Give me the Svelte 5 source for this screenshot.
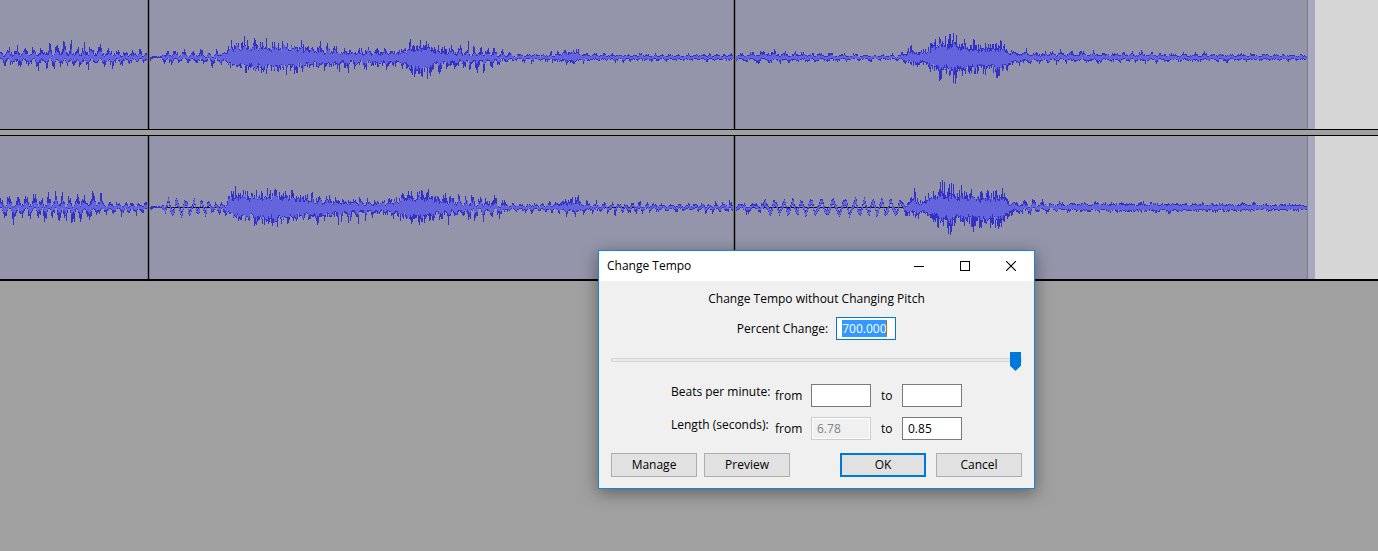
<script>
  import { onMount } from 'svelte';

  const WIDTH = 1308;

  // Envelope points: [x, peak above, peak below, body (0..1), swing (0..1)]
  const left = [
    [0, 11, 9, .3, .6], [14, 14, 12, .3, .6], [35, 16, 13, .3, .6], [60, 19, 14, .35, .6], [95, 16, 13, .35, .6],
    [108, 11, 12, .35, .6], [130, 8, 9, .3, .6], [147, 8, 6, .3, .6], [150, 2, 4, .3, .4], [153, 1, 0, 1, 0],
    [161, 1, 0, 1, 0], [163, 9, 7, .3, .6], [190, 8, 8, .3, .7], [215, 10, 9, .3, .7], [225, 8, 8, .5, .3],
    [232, 20, 14, .6, .1], [260, 19, 18, .6, .1], [290, 18, 17, .6, .1], [310, 16, 15, .5, .25], [325, 15, 15, .5, .3],
    [350, 12, 14, .45, .4], [380, 12, 13, .45, .4], [400, 10, 11, .5, .3], [408, 16, 15, .55, .1], [416, 17, 25, .5, .1],
    [427, 17, 25, .5, .1], [432, 15, 15, .5, .2], [450, 14, 15, .4, .4], [470, 16, 15, .35, .6], [490, 13, 15, .35, .6],
    [505, 8, 8, .3, .6], [515, 5, 5, .35, .6], [550, 6, 6, .35, .6], [572, 12, 8, .45, .2], [580, 8, 7, .4, .4],
    [590, 5, 5, .35, .5], [630, 4, 4, .4, .5], [700, 4, 4, .4, .5], [734, 4, 4, .4, .5], [765, 8, 7, .35, .5],
    [810, 6, 6, .35, .5], [860, 4, 4, .35, .6], [900, 4, 4, .35, .6], [908, 12, 11, .45, .3], [920, 12, 12, .45, .3],
    [927, 10, 10, .5, .2], [935, 26, 22, .5, .05], [957, 28, 27, .45, .05], [963, 17, 19, .55, .1], [985, 17, 18, .5, .1],
    [1003, 18, 22, .5, .1], [1010, 9, 10, .5, .3], [1024, 11, 10, .4, .5], [1033, 7, 7, .4, .5], [1065, 8, 7, .4, .5],
    [1105, 7, 6, .4, .5], [1155, 6, 6, .4, .5], [1200, 5, 5, .4, .5], [1250, 4, 4, .4, .4], [1307, 3, 3, .5, .3]
  ];
  const right = [
    [0, 12, 11, .3, .7], [14, 14, 22, .3, .7], [20, 15, 14, .3, .7], [45, 17, 14, .3, .7], [60, 18, 19, .3, .7],
    [72, 16, 19, .3, .7], [91, 21, 12, .35, .6], [99, 21, 10, .35, .6], [103, 6, 8, .3, .6], [130, 8, 9, .3, .7],
    [147, 8, 6, .3, .6], [150, 2, 4, .3, .4], [153, 1, 0, 1, 0], [161, 1, 0, 1, 0], [165, 10, 9, .25, .9],
    [200, 8, 9, .2, .95], [225, 8, 10, .3, .7], [230, 20, 13, .6, .1], [248, 19, 18, .6, .1], [275, 20, 22, .6, .1],
    [300, 17, 16, .55, .2], [320, 15, 19, .5, .3], [350, 12, 15, .45, .4], [375, 10, 12, .4, .5], [395, 12, 11, .5, .3],
    [412, 21, 21, .5, .1], [425, 20, 18, .5, .2], [445, 19, 17, .4, .5], [470, 17, 16, .35, .6], [500, 11, 14, .3, .7],
    [508, 5, 5, .35, .6], [550, 6, 6, .35, .6], [575, 15, 9, .4, .3], [590, 6, 6, .35, .7], [620, 7, 8, .25, .84],
    [650, 6, 6, .3, .7], [690, 5, 5, .3, .7], [734, 7, 7, .25, .7], [765, 7, 8, .25, .86], [800, 9, 9, .18, .95],
    [850, 10, 9, .18, .95], [903, 9, 9, .2, .9], [907, 10, 13, .4, .4], [914, 17, 13, .4, .3], [922, 10, 12, .45, .3],
    [928, 16, 13, .5, .1], [937, 28, 21, .45, .05], [950, 27, 30, .45, .05], [957, 20, 21, .5, .1], [972, 21, 21, .5, .1],
    [980, 18, 27, .5, .1], [1003, 20, 21, .5, .1], [1010, 9, 10, .4, .4], [1025, 8, 11, .3, .7], [1040, 11, 8, .3, .7],
    [1056, 7, 6, .35, .6], [1075, 6, 5, .5, .3], [1150, 6, 6, .5, .3], [1230, 5, 5, .5, .3], [1307, 4, 4, .5, .3]
  ];

  function noise(n) {
    const v = Math.sin(n * 12.9898) * 43758.5453;
    return v - Math.floor(v);
  }

  function at(points, x) {
    let i = 0;
    while (i < points.length - 2 && points[i + 1][0] <= x) i++;
    const a = points[i];
    const b = points[i + 1];
    const t = (x - a[0]) / (b[0] - a[0]);
    return a.map((v, k) => v + (b[k] - v) * t);
  }

  // One column per sample: the outer peak and the inner RMS bar.
  function wave(points, mid, seed) {
    let peak = '';
    let rms = '';
    for (let x = 0; x < WIDTH - 1; x++) {
      const [, up, down, body, swing] = at(points, x);
      const n1 = noise(x + seed * 971);
      const n2 = noise(x * 3 + seed * 577 + 5);
      const n3 = noise(x * 7 + seed * 131);
      const phase = (x * 2 * Math.PI) / (x > 734 ? 10 : 7.6) + 1.4 * Math.sin(x / 13 + seed);
      let top, bottom, innerTop, innerBottom;
      if (swing > 0.85) {
        const c = (Math.sin(phase) + 0.2 * Math.sin(phase * 2.3)) * up * 0.6;
        top = Math.round(c + 1.5 + n1 * 2);
        bottom = Math.round(-c + 1.5 + n2 * 2);
        innerTop = top - 1 - Math.round(n3);
        innerBottom = bottom - 1;
      } else {
        const s = Math.max(-1, Math.min(1, Math.sin(phase) + 1.1 * (n3 - 0.5)));
        const gateUp = 1 - swing * (0.5 - 0.5 * s) * 1.4;
        const gateDown = 1 - swing * (0.5 + 0.5 * s) * 1.4;
        const lull = 0.92 + 0.14 * Math.sin(phase * 0.83 + 2);
        const rawTop = up * (0.48 + 0.62 * n1 ** 1.5) * gateUp * lull;
        const rawBottom = down * (0.48 + 0.62 * n2 ** 1.5) * gateDown * lull;
        top = Math.round(rawTop);
        bottom = Math.round(rawBottom);
        innerTop = Math.round(Math.min(rawTop - 0.7, up * (body + 0.08) * (0.55 + 0.5 * n3) * gateUp * lull));
        innerBottom = Math.round(Math.min(rawBottom - 0.7, down * (body + 0.08) * (0.6 + 0.5 * n1) * gateDown * lull));
      }
      if (top + bottom < 0) bottom = -top;
      peak += `M${x} ${mid - top}h1V${mid + bottom + 1}h-1z`;
      if (up > 2 && innerTop + innerBottom >= 0) {
        rms += `M${x} ${mid - innerTop}h1V${mid + innerBottom + 1}h-1z`;
      }
    }
    return { peak, rms };
  }

  const tracks = [
    { name: 'Left channel', height: 129, mid: 57, ...wave(left, 57, 1) },
    { name: 'Right channel', height: 143, mid: 71, ...wave(right, 71, 2) }
  ];
  const splits = [148, 734];

  let percentInput;
  onMount(() => {
    percentInput.focus();
    percentInput.select();
  });
</script>

<main>
  <section class="tracks" aria-label="Audio tracks">
    {#each tracks as track}
      <div class="track">
        <svg class="clip" role="img" aria-label={track.name} height={track.height} viewBox="0 0 {WIDTH} {track.height}" preserveAspectRatio="none" shape-rendering="crispEdges">
          <rect width={WIDTH} height={track.height} fill="#9494aa" />
          <rect y={track.mid} width={WIDTH - 1} height="1" fill="#000" />
          <path d={track.peak} fill="#3232c8" />
          <path d={track.rms} fill="#6464dc" />
          {#each splits as x}
            <rect x={x - 1} width="3" height={track.height} fill="#77777f" />
            <rect {x} width="1" height={track.height} fill="#000" />
          {/each}
          <rect x={WIDTH - 1} width="1" height={track.height} fill="#7c7c86" />
        </svg>
        <div class="selection"></div>
        <div class="blank"></div>
      </div>
    {/each}
  </section>

  <form class="dialog" aria-labelledby="dialog-title" onsubmit={(e) => e.preventDefault()}>
    <header>
      <span id="dialog-title">Change Tempo</span>
      <button type="button" class="caption" aria-label="Minimize">
        <svg width="10" height="10" shape-rendering="crispEdges"><path d="M0 5h10v1H0z" /></svg>
      </button>
      <button type="button" class="caption" aria-label="Maximize">
        <svg width="10" height="10" shape-rendering="crispEdges"><path d="M.5 .5h9v9h-9z" fill="none" stroke="#000" /></svg>
      </button>
      <button type="button" class="caption" aria-label="Close">
        <svg width="10" height="10"><path d="M0 0l10 10M10 0L0 10" fill="none" stroke="#000" stroke-width="1.1" /></svg>
      </button>
    </header>

    <div class="body">
      <p>Change Tempo without Changing Pitch</p>
      <div class="percent">
        <label for="percent">Percent Change:</label>
        <span class="field">
          <input id="percent" class="text active" type="text" value="700.000" bind:this={percentInput} />
          <i class="caret"></i>
        </span>
      </div>
      <input class="slider" type="range" min="-95" max="700" value="700" aria-label="Percent Change" />

      <div class="values">
        <span class="name">Beats per minute:</span>
        <label for="bpm-from">from</label>
        <input id="bpm-from" class="text" type="text" />
        <label for="bpm-to">to</label>
        <input id="bpm-to" class="text" type="text" />

        <span class="name">Length (seconds):</span>
        <label for="len-from">from</label>
        <input id="len-from" class="text" type="text" value="6.78" disabled />
        <label for="len-to">to</label>
        <input id="len-to" class="text" type="text" value="0.85" />
      </div>

      <div class="buttons">
        <button type="button">Manage</button>
        <button type="button">Preview</button>
        <button type="submit" class="default">OK</button>
        <button type="button">Cancel</button>
      </div>
    </div>
  </form>
</main>

<style>
  :global(body) {
    margin: 0;
    background: #a0a0a0;
  }
  main {
    position: relative;
    min-height: 100vh;
    overflow: hidden;
    background: #a0a0a0;
    font: 12px/16px "Open Sans", "Segoe UI", sans-serif;
    color: #000;
  }
  .tracks {
    display: flex;
    flex-direction: column;
    gap: 5px;
  }
  .track {
    display: flex;
    border-bottom: 1px solid #000;
  }
  .track + .track {
    border-top: 1px solid #000;
    border-bottom-width: 2px;
  }
  .clip {
    display: block;
    flex: 1;
    min-width: 0;
  }
  .selection {
    width: 7px;
    background: #a8a8c0;
  }
  .blank {
    width: 63px;
    background: #d6d6d6;
  }
  .dialog {
    position: absolute;
    left: 598px;
    top: 250px;
    width: 437px;
    box-sizing: border-box;
    border: 1px solid #1883d7;
    background: #f0f0f0;
    box-shadow: 0 4px 16px rgba(0, 0, 0, 0.4);
  }
  header {
    display: flex;
    align-items: center;
    height: 30px;
    padding-left: 8px;
    background: #fff;
  }
  header span {
    flex: 1;
  }
  .caption {
    display: grid;
    place-items: center;
    width: 46px;
    height: 28px;
    padding: 0;
    border: 0;
    background: none;
  }
  .caption svg {
    display: block;
  }
  .body {
    display: flex;
    flex-direction: column;
    padding: 10px 12px 11px;
  }
  p {
    margin: 0 0 10px;
    text-align: center;
  }
  .percent {
    display: flex;
    justify-content: center;
    align-items: center;
    gap: 8px;
  }
  .field {
    position: relative;
    display: flex;
  }
  .text {
    box-sizing: border-box;
    width: 60px;
    height: 23px;
    padding: 0 5px;
    border: 1px solid #7a7a7a;
    border-radius: 0;
    outline: none;
    background: #fff;
    color: #000;
    font: 12px/15px "Open Sans", "Segoe UI", sans-serif;
  }
  .text.active {
    border-color: #0078d7;
  }
  .text:disabled {
    border-color: #ccc;
    background: #f0f0f0;
    box-shadow: inset 0 0 0 1px #fff;
    color: #838383;
  }
  .text::selection {
    background: #3399ff;
    color: #fff;
  }
  .caret {
    position: absolute;
    left: 50px;
    top: 4px;
    width: 1px;
    height: 15px;
    background: #cc6600;
  }
  .slider {
    appearance: none;
    height: 20px;
    margin: 10px 0 14px;
    border: 0;
    background: none;
    outline: none;
  }
  .slider::-webkit-slider-runnable-track {
    box-sizing: border-box;
    height: 4px;
    border: 1px solid #d6d6d6;
    background: #e7eaea;
  }
  .slider::-webkit-slider-thumb {
    appearance: none;
    width: 11px;
    height: 19px;
    margin-top: -7px;
    background: #0078d7;
    clip-path: polygon(0 0, 100% 0, 100% 72%, 50% 100%, 0 72%);
  }
  .values {
    display: grid;
    grid-template-columns: 94px 26px 60px 11px 60px;
    gap: 10px;
    justify-content: center;
    align-items: center;
  }
  .name {
    align-self: start;
    white-space: nowrap;
  }
  .buttons {
    display: flex;
    margin-top: 13px;
  }
  .buttons button {
    width: 86px;
    height: 24px;
    padding: 0;
    border: 1px solid #adadad;
    background: #e1e1e1;
    color: #000;
    font: inherit;
  }
  .buttons button + button {
    margin-left: 7px;
  }
  .buttons .default {
    margin-left: auto;
    border: 2px solid #0078d7;
  }
  .buttons .default + button {
    margin-left: 10px;
  }
</style>
